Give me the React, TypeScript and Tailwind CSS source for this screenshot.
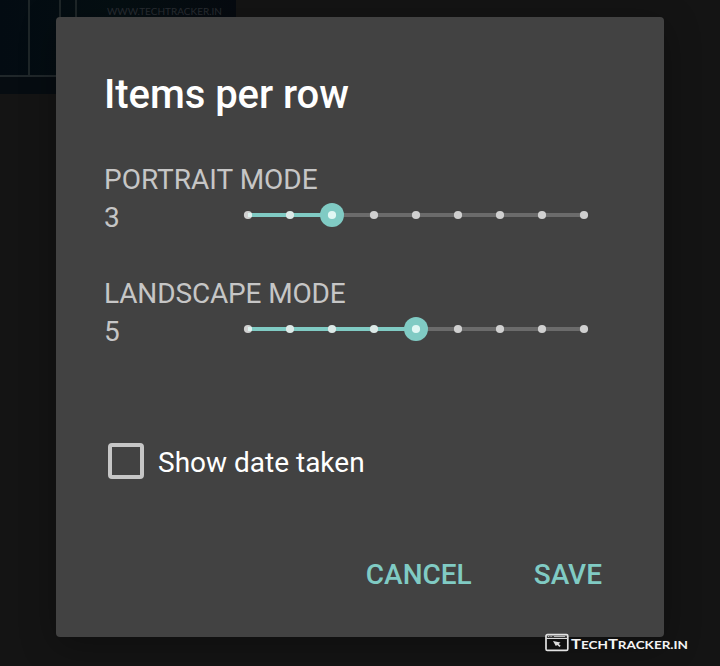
import React from "react";

const STOPS = [0, 1, 2, 3, 4, 5, 6, 7, 8];

function StepSlider({ index }: { index: number }) {
  const x = 6 + index * 42;
  return (
    <svg width="348" height="24" viewBox="0 0 348 24" className="mt-1 shrink-0">
      <rect x="6" y="10" width="336" height="4" fill="#6b6b6b" />
      <rect x="6" y="10" width={x - 6} height="4" fill="#80cbc4" />
      <circle cx={x} cy="12" r="12" fill="#80cbc4" />
      {STOPS.map((s) => (
        <circle
          key={s}
          cx={6 + s * 42}
          cy="12"
          r="4.1"
          fill={s === index ? "#e0f7f4" : s > 0 && s < index ? "#dce9e7" : "#d0d0d0"}
        />
      ))}
      <path d="M6 10h3.6a4.1 4.1 0 0 1 0 4H6z" fill="#dff2ef" />
    </svg>
  );
}

function Setting({ label, value }: { label: string; value: number }) {
  return (
    <section className="text-[28px] leading-[38px] text-[#c6c6c6]">
      <div className={value === 3 ? "" : "tracking-[-0.14px]"}>{label}</div>
      <div className="flex h-[38px] items-start">
        <span className="w-[138px]">{value}</span>
        <StepSlider index={value - 1} />
      </div>
    </section>
  );
}

function Backdrop() {
  return (
    <div className="absolute top-0 left-0 h-[94px] w-[236px] overflow-hidden bg-[#060c11]">
      <div className="h-[77px] w-full border-b-2 border-[#20272a] bg-linear-to-r from-[#030b12] via-[#050f12] to-[#060a10]">
        <div className="flex h-full">
          <div className="w-[30px] shrink-0 border-r-2 border-[#1e2628]" />
          <div className="w-[31px] shrink-0 border-r-2 border-[#1e2628]" />
          <div className="w-4 shrink-0 border-r-2 border-[#1e2628]" />
          <svg width="150" height="20" className="shrink-0">
            <text
              x="30"
              y="15"
              textLength="115"
              lengthAdjust="spacing"
              className="fill-[#292d33] font-['Lato'] text-[10px]"
            >
              WWW.TECHTRACKER.IN
            </text>
          </svg>
        </div>
      </div>
    </div>
  );
}

function Watermark() {
  return (
    <div className="absolute top-[633px] left-[545px] flex items-start text-white">
      <svg width="24" height="19" viewBox="0 0 24 19" fill="none">
        <rect x="1" y="1.7" width="21.8" height="15.6" rx="1.4" stroke="#e2e2e2" strokeWidth="1.7" />
        <path d="M1 5.4h22" stroke="#d8d8d8" strokeWidth="1.2" />
        <path d="M3 3.5h1.2M5.5 3.5h1.2M9 3.5h11" stroke="#b5b5b5" strokeWidth="1" />
        <path d="M8 8l7.5 1.4-1.8 1.5 2 1.9-1.2 1.1-2.2-2-1.5 1.2z" fill="#dddddd" />
      </svg>
      <svg width="120" height="20" className="ml-px overflow-visible fill-[#f4f4f4] font-['Lato'] text-[11px] font-bold">
        <text x="1" y="15.5" textLength="117" lengthAdjust="spacingAndGlyphs">
          <tspan fontSize="13.5">T</tspan>
          <tspan>ECH</tspan>
          <tspan fontSize="13.5">T</tspan>
          <tspan>RACKER.IN</tspan>
        </text>
      </svg>
    </div>
  );
}

export default function App() {
  return (
    <main className="relative flex h-[666px] w-[720px] overflow-hidden bg-[#141414] pt-[17px] pl-14 font-['Roboto',sans-serif]">
      <Backdrop />
      <div className="relative flex h-[620px] w-[608px] flex-col rounded bg-[#424242] pt-[54px] pl-12 shadow-[0_8px_36px_rgba(0,0,0,0.3)]">
        <h1 className="text-[40px] leading-[48px] font-medium tracking-[-0.05px] text-white">Items per row</h1>
        <div className="mt-[42px] flex flex-col gap-[38px]">
          <Setting label="PORTRAIT MODE" value={3} />
          <Setting label="LANDSCAPE MODE" value={5} />
        </div>
        <label className="mt-[93px] flex h-[38px] items-start gap-[14px] pl-1 text-[28px] leading-[38px] text-white">
          <span className="-mt-px h-9 w-9 rounded-[4px] border-4 border-[#c6c6c6]" />
          <span>Show date taken</span>
        </label>
        <div className="mt-[74px] flex justify-end gap-[62px] pr-[62px] text-[28px] leading-[38px] font-medium text-[#80cbc4]">
          <button>CANCEL</button>
          <button>SAVE</button>
        </div>
      </div>
      <Watermark />
    </main>
  );
}
